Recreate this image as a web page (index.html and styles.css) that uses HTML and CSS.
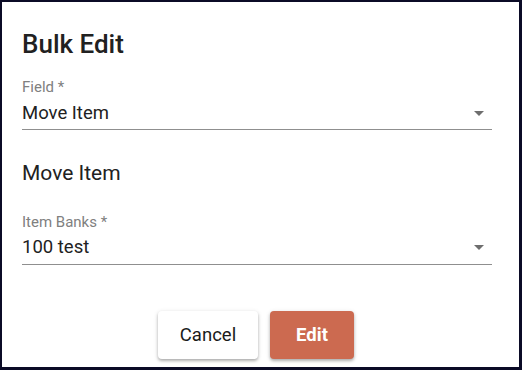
FILE: index.html
```html
<!DOCTYPE html>
<html>
<head>
<meta charset="utf-8">
<link rel="stylesheet" href="styles.css">
</head>
<body>
<div class="dialog">
  <h1 class="title">Bulk Edit</h1>
  <div class="field">
    <div class="label">Field *</div>
    <div class="select">
      <span class="value">Move Item</span>
      <span class="arrow"></span>
    </div>
  </div>
  <h2 class="section">Move Item</h2>
  <div class="field field-second">
    <div class="label">Item Banks *</div>
    <div class="select">
      <span class="value">100 test</span>
      <span class="arrow"></span>
    </div>
  </div>
  <div class="actions">
    <button class="btn btn-cancel">Cancel</button>
    <button class="btn btn-edit">Edit</button>
  </div>
</div>
</body>
</html>
```
FILE: styles.css
```css
html, body {
  margin: 0;
  padding: 0;
  background: #0b0b26;
}
.dialog {
  box-sizing: border-box;
  width: 522px;
  height: 370px;
  border-style: solid;
  border-color: #0b0b26;
  border-width: 2px 3px 3px 2px;
  background: #ffffff;
  padding: 27px 27px 0 20px;
  display: flex;
  flex-direction: column;
  font-family: Roboto, "Liberation Sans", sans-serif;
  color: #212121;
}
.title {
  margin: 0;
  font-size: 26px;
  line-height: 30px;
  font-weight: 500;
}
.field {
  margin-top: 19px;
  display: flex;
  flex-direction: column;
  gap: 6px;
}
.field-second {
  margin-top: 27px;
  gap: 5px;
}
.label {
  font-size: 15px;
  line-height: 18px;
  color: #808080;
}
.select {
  display: flex;
  align-items: center;
  justify-content: space-between;
  padding-bottom: 5px;
  border-bottom: 1px solid #8f8f8f;
}
.field-second .select {
  padding-bottom: 6px;
}
.value {
  font-size: 18.5px;
  line-height: 22px;
}
.arrow {
  width: 0;
  height: 0;
  border-left: 5px solid transparent;
  border-right: 5px solid transparent;
  border-top: 5px solid #6e6e6e;
  margin-right: 8px;
}
.section {
  margin: 30px 0 0 0;
  font-size: 21px;
  line-height: 26px;
  font-weight: 400;
}
.actions {
  margin-top: 46px;
  padding-right: 2px;
  display: flex;
  justify-content: center;
  gap: 12px;
}
.btn {
  height: 48px;
  border: none;
  border-radius: 4px;
  font-family: Roboto, "Liberation Sans", sans-serif;
  font-size: 18.5px;
  box-shadow: 0 2px 3px rgba(0,0,0,0.25), 0 1px 5px rgba(0,0,0,0.12);
  padding: 0;
}
.btn-cancel {
  width: 100px;
  background: #ffffff;
  color: #1a1a1a;
  font-weight: 400;
}
.btn-edit {
  width: 84px;
  background: #cc6a50;
  color: #ffffff;
  font-weight: 700;
}
```
